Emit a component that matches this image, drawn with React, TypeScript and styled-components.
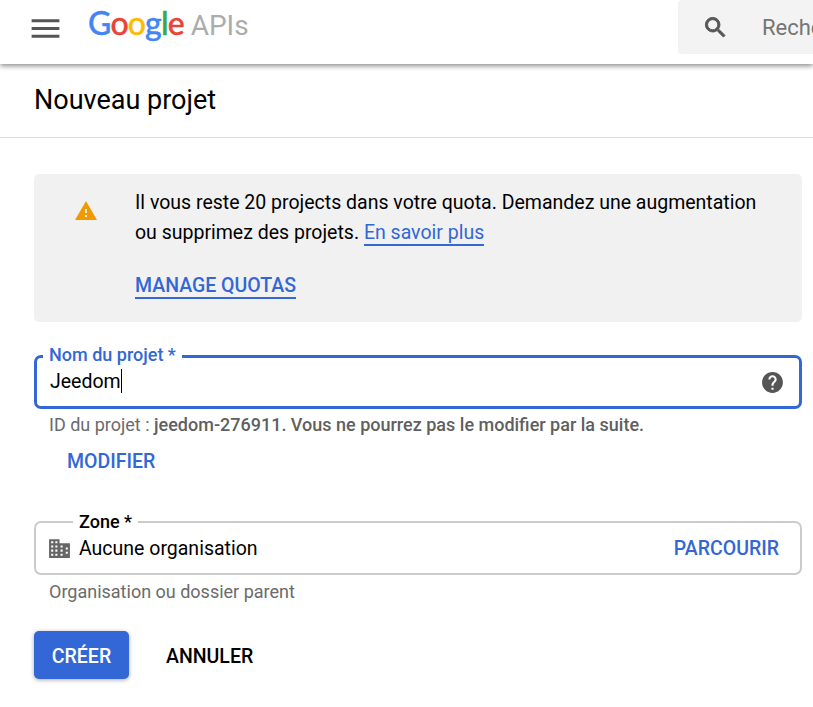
import React from "react";
import styled, { createGlobalStyle } from "styled-components";

const BLUE = "#3367d6";

const GlobalStyle = createGlobalStyle`
  html, body {
    margin: 0;
    padding: 0;
    background: #fff;
    overflow: hidden;
  }
  body {
    font-family: Roboto, "Liberation Sans", sans-serif;
    color: #000;
  }
`;

const Page = styled.div`
  width: 813px;
  height: 707px;
  overflow: hidden;
`;

const TopBar = styled.header`
  position: relative;
  z-index: 1;
  display: flex;
  align-items: flex-start;
  height: 64px;
  background: #fff;
  box-shadow: 0 2px 5px rgba(0, 0, 0, 0.45);
`;

const MenuButton = styled.div`
  display: flex;
  margin: 10px 0 0 27px;
  color: #555;
`;

const Logo = styled.div`
  display: flex;
  align-items: baseline;
  margin: 1px 0 0 24px;
  height: 44px;
  font-family: Lato, sans-serif;
  font-size: 32px;
  font-weight: 500;
  line-height: 44px;
  letter-spacing: -0.9px;
  -webkit-text-stroke: 0.4px;
  white-space: nowrap;
`;

const LogoLetter = styled.span<{ $color: string }>`
  color: ${(p) => p.$color};
`;

const LogoProduct = styled.span`
  margin-left: 7px;
  color: #acacac;
  font-family: Roboto, sans-serif;
  font-size: 28px;
  font-weight: 400;
  letter-spacing: 0;
  -webkit-text-stroke: 0;
`;

const SearchBox = styled.div`
  display: flex;
  align-items: center;
  flex: 0 0 200px;
  height: 54px;
  margin-left: auto;
  margin-right: -65px;
  padding-left: 24px;
  box-sizing: border-box;
  background: #f3f3f3;
  border-radius: 4px 0 0 4px;
  color: #555;
`;

const SearchText = styled.span`
  margin-left: 33px;
  font-size: 22px;
  color: #757575;
`;

const TitleRow = styled.div`
  height: 74px;
  box-sizing: border-box;
  padding: 19px 34px 0;
  border-bottom: 1px solid #dcdcdc;
  font-size: 27px;
  line-height: 34px;
`;

const Content = styled.main`
  display: flex;
  flex-direction: column;
  width: 768px;
  margin: 36px 0 0 34px;
`;

const Notice = styled.section`
  display: flex;
  height: 148px;
  box-sizing: border-box;
  padding: 14px 0 0 40px;
  background: #f1f1f1;
  border-radius: 5px;
`;

const NoticeIcon = styled.div`
  display: flex;
  flex: 0 0 24px;
  margin-top: 11px;
  margin-right: 37px;
`;

const NoticeBody = styled.div`
  font-size: 19.5px;
  line-height: 30px;
`;

const TextLink = styled.a`
  color: ${BLUE};
  text-decoration: none;
  border-bottom: 2px solid ${BLUE};
`;

const QuotaLink = styled(TextLink)`
  display: inline-block;
  margin-top: 26px;
  line-height: 23px;
  font-weight: 500;
`;

const Field = styled.fieldset<{ $focused?: boolean }>`
  display: flex;
  align-items: center;
  margin: 0;
  min-width: 0;
  box-sizing: border-box;
  height: ${(p) => (p.$focused ? "65px" : "64px")};
  padding: 0 ${(p) => (p.$focused ? "14px" : "21px")} ${(p) => (p.$focused ? "2px" : "9px")} 13px;
  border: ${(p) => (p.$focused ? `3px solid ${BLUE}` : "2px solid #cbcbcb")};
  border-radius: 7px;
`;

const FocusedField = styled(Field)`
  margin-top: 22px;
`;

const FieldLegend = styled.legend<{ $focused?: boolean; $inset: number }>`
  margin-left: ${(p) => p.$inset}px;
  padding: 0 6px ${(p) => (p.$focused ? "3px" : "1px")};
  font-size: 18px;
  line-height: 21px;
  font-weight: 500;
  color: ${(p) => (p.$focused ? BLUE : "#000")};
`;

const FieldValue = styled.span`
  flex: 1;
  font-size: 19.5px;
  line-height: 28px;
`;

const Caret = styled.span`
  display: inline-block;
  width: 1px;
  height: 24px;
  vertical-align: -5px;
  background: #000;
`;

const Hint = styled.p<{ $top: number }>`
  margin: ${(p) => p.$top}px 0 0 15px;
  font-size: 18px;
  line-height: 24px;
  color: #6b6b6b;
`;

const HintStrong = styled.span`
  font-weight: 500;
  color: #5f5f5f;
`;

const TextAction = styled.button`
  padding: 0;
  border: 0;
  background: none;
  font-family: inherit;
  font-size: 19.5px;
  line-height: 24px;
  font-weight: 500;
  color: ${BLUE};
`;

const EditAction = styled(TextAction)`
  align-self: flex-start;
  margin: 13px 0 0 33px;
`;

const ZoneField = styled.div`
  margin-top: 37px;
`;

const ZoneIcon = styled.div`
  display: flex;
  margin: 0 7px 0 -2px;
  color: #666;
`;

const Actions = styled.div`
  display: flex;
  align-items: center;
  gap: 37px;
  margin-top: 27px;
`;

const PrimaryButton = styled.button`
  width: 95px;
  height: 48px;
  padding: 2px 0 0;
  border: 0;
  border-radius: 5px;
  background: ${BLUE};
  box-shadow: 0 1px 4px rgba(0, 0, 0, 0.35);
  font-family: inherit;
  font-size: 19.5px;
  font-weight: 500;
  color: #fff;
`;

const SecondaryButton = styled(TextAction)`
  padding-top: 3px;
  color: #000;
`;

const GOOGLE_LETTERS: [string, string][] = [
  ["G", "#4285f4"],
  ["o", "#ea4335"],
  ["o", "#fbbc05"],
  ["g", "#4285f4"],
  ["l", "#34a853"],
  ["e", "#ea4335"],
];

const Icon: React.FC<{ size: number; d: string; fill?: string; bold?: boolean }> = ({
  size,
  d,
  fill = "currentColor",
  bold,
}) => (
  <svg width={size} height={size} viewBox="0 0 24 24" fill={fill} fillRule="evenodd">
    <path d={d} stroke={bold ? "currentColor" : "none"} strokeWidth={bold ? 0.8 : 0} />
  </svg>
);

const App: React.FC = () => {
  return (
    <Page>
      <GlobalStyle />
      <TopBar>
        <MenuButton>
          <Icon size={37} d="M3 18h18v-2H3v2zm0-5h18v-2H3v2zm0-7v2h18V6H3z" />
        </MenuButton>
        <Logo>
          {GOOGLE_LETTERS.map(([letter, color], i) => (
            <LogoLetter key={i} $color={color}>{letter}</LogoLetter>
          ))}
          <LogoProduct>APIs</LogoProduct>
        </Logo>
        <SearchBox>
          <Icon
            size={27}
            bold
            d="M15.5 14h-.79l-.28-.27A6.471 6.471 0 0 0 16 9.5 6.5 6.5 0 1 0 9.5 16c1.61 0 3.09-.59 4.23-1.57l.27.28v.79l5 4.99L20.49 19l-4.99-5zm-6 0C7.01 14 5 11.99 5 9.5S7.01 5 9.5 5 14 7.01 14 9.5 11.99 14 9.5 14z"
          />
          <SearchText>Rechercher</SearchText>
        </SearchBox>
      </TopBar>
      <TitleRow>Nouveau projet</TitleRow>
      <Content>
        <Notice>
          <NoticeIcon>
            <Icon size={24} fill="#f29900" d="M1 21h22L12 2 1 21zm12-3h-2v-2h2v2zm0-4h-2v-4h2v4z" />
          </NoticeIcon>
          <NoticeBody>
            Il vous reste 20 projects dans votre quota. Demandez une augmentation
            <br />
            ou supprimez des projets. <TextLink>En savoir plus</TextLink>
            <br />
            <QuotaLink>MANAGE QUOTAS</QuotaLink>
          </NoticeBody>
        </Notice>
        <FocusedField $focused>
          <FieldLegend $focused $inset={-7}>Nom du projet *</FieldLegend>
          <FieldValue>Jeedom<Caret /></FieldValue>
          <Icon
            size={25}
            fill="#555"
            d="M12 2C6.48 2 2 6.48 2 12s4.48 10 10 10 10-4.48 10-10S17.52 2 12 2zm1 17h-2v-2h2v2zm2.07-7.75l-.9.92C13.45 12.9 13 13.5 13 15h-2v-.5c0-1.1.45-2.1 1.17-2.83l1.24-1.26c.37-.36.59-.86.59-1.41 0-1.1-.9-2-2-2s-2 .9-2 2H8c0-2.21 1.79-4 4-4s4 1.79 4 4c0 .88-.36 1.68-.93 2.25z"
          />
        </FocusedField>
        <Hint $top={4}>
          ID du projet : <HintStrong>jeedom-276911. Vous ne pourrez pas le modifier par la suite.</HintStrong>
        </Hint>
        <EditAction>MODIFIER</EditAction>
        <ZoneField>
          <Field>
            <FieldLegend $inset={24}>Zone *</FieldLegend>
            <ZoneIcon>
              <Icon
                size={25}
                d="M12 7V3H2v18h20V7H12zM4 5h2v2H4zM8 5h2v2H8zM4 9h2v2H4zM8 9h2v2H8zM4 13h2v2H4zM8 13h2v2H8zM4 17h2v2H4zM8 17h2v2H8zM13 9h2v2h-2zM13 13h2v2h-2zM13 17h2v2h-2zM18 11h2v2h-2zM18 15h2v2h-2z"
              />
            </ZoneIcon>
            <FieldValue>Aucune organisation</FieldValue>
            <TextAction>PARCOURIR</TextAction>
          </Field>
        </ZoneField>
        <Hint $top={5}>Organisation ou dossier parent</Hint>
        <Actions>
          <PrimaryButton>CRÉER</PrimaryButton>
          <SecondaryButton>ANNULER</SecondaryButton>
        </Actions>
      </Content>
    </Page>
  );
};

export default App;
